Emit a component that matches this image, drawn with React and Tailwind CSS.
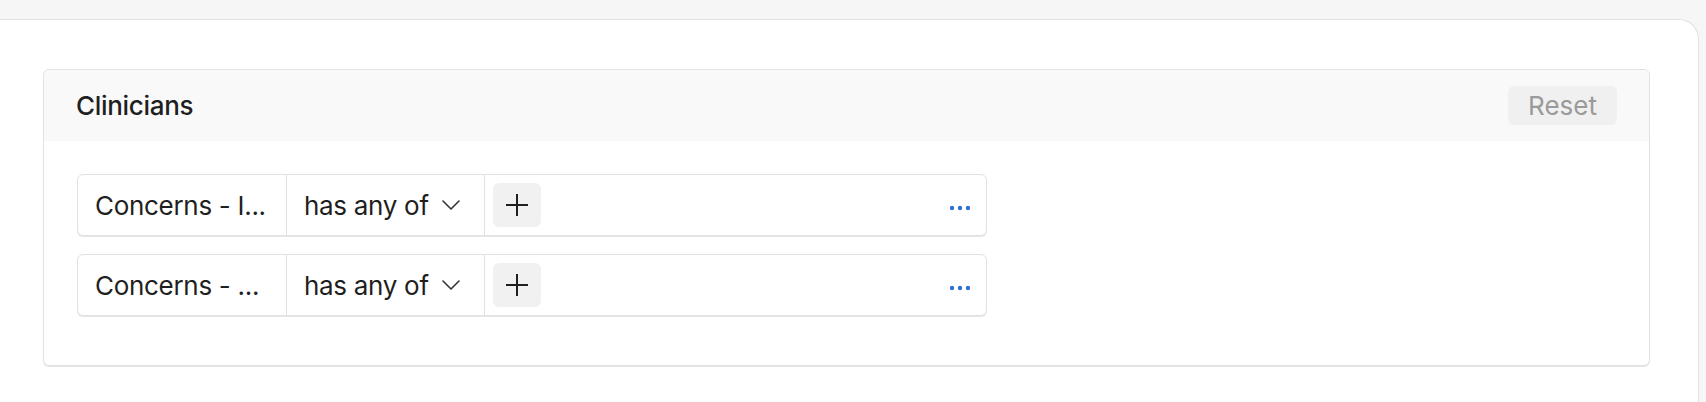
import { useState } from 'react'

const font = { fontFamily: 'Inter, "Noto Sans", sans-serif' }

function Chevron() {
  return (
    <svg width="18" height="10" viewBox="0 0 18 10" fill="none" className="shrink-0">
      <path d="M1 1l8 8 8-8" stroke="#333" strokeWidth="1.6" strokeLinecap="round" strokeLinejoin="round" />
    </svg>
  )
}

function Plus() {
  return (
    <svg width="24" height="24" viewBox="0 0 24 24" fill="none">
      <path d="M12 1v22M1 12h22" stroke="#1f1f1f" strokeWidth="2" />
    </svg>
  )
}

function Dots() {
  return (
    <svg width="22" height="6" viewBox="0 0 22 6" className="mt-[6px]">
      <circle cx="3" cy="3" r="2.2" fill="#2f6fd8" />
      <circle cx="11" cy="3" r="2.2" fill="#2f6fd8" />
      <circle cx="19" cy="3" r="2.2" fill="#2f6fd8" />
    </svg>
  )
}

function FilterRow({ field, operator }) {
  return (
    <div className="flex h-[62px] w-[910px] rounded-[6px] border border-[#e2e2e2] bg-white shadow-[0_1px_0_#e6e6e6]">
      <div className="flex w-[209px] items-center border-r border-[#e2e2e2] pl-[17px] text-[26px] tracking-[-0.3px] text-[#1f1f1f]">
        {field}
      </div>
      <div className="flex w-[198px] items-center gap-[13px] border-r border-[#e2e2e2] pl-[17px] text-[26px] tracking-[-0.3px] text-[#1f1f1f]">
        <span>{operator}</span>
        <Chevron />
      </div>
      <div className="flex flex-1 items-center justify-between pl-[8px] pr-[15px]">
        <button className="flex h-[44px] w-[48px] items-center justify-center rounded-[6px] bg-[#f1f1f1]">
          <Plus />
        </button>
        <Dots />
      </div>
    </div>
  )
}

export default function App() {
  const [rows] = useState([
    { id: 1, field: 'Concerns - I...', operator: 'has any of' },
    { id: 2, field: 'Concerns - ...', operator: 'has any of' },
  ])

  return (
    <div className="h-[402px] overflow-hidden bg-[#f6f6f6] pt-[19px] pr-[7px]" style={font}>
      <div className="h-[420px] rounded-tr-[20px] border-t border-r border-[#e2e2e2] bg-white pt-[49px] pl-[43px] pr-[48px]">
        {/* Clinicians filter panel */}
        <div className="rounded-[6px] border border-[#e2e2e2] bg-white shadow-[0_1px_0_#e6e6e6]">
          <div className="flex h-[71px] items-center justify-between rounded-t-[6px] bg-[#f9f9f9] pl-[32px] pr-[32px]">
            <h2 className="text-[26px] font-medium tracking-[-0.3px] text-[#1f1f1f]">Clinicians</h2>
            <button className="h-[39px] w-[109px] rounded-[6px] bg-[#f0f0f0] text-[26px] text-[#9a9a9a]">
              Reset
            </button>
          </div>
          <div className="flex flex-col gap-[18px] pt-[33px] pb-[49px] pl-[33px]">
            {rows.map(row => (
              <FilterRow key={row.id} field={row.field} operator={row.operator} />
            ))}
          </div>
        </div>
      </div>
    </div>
  )
}
